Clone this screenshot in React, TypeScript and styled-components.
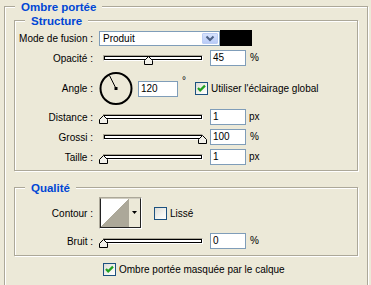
import React from "react";
import styled, { createGlobalStyle } from "styled-components";

const Global = createGlobalStyle`
  html, body { margin: 0; padding: 0; background: #ECE9D8; overflow: hidden; }
  body { font-family: "Liberation Sans", Arial, sans-serif; font-size: 10px; color: #000; }
  * { box-sizing: border-box; }
`;

const Panel = styled.div`
  width: 371px;
  height: 285px;
  overflow: hidden;
  padding: 6px 0 0 4px;
`;

const Group = styled.div<{ $pt: number; $pb: number; $mt?: number; $w?: number }>`
  position: relative;
  width: ${(p) => (p.$w ? `${p.$w}px` : "auto")};
  margin-top: ${(p) => p.$mt ?? 0}px;
  border: 1px solid #aca899;
  box-shadow: inset 1px 1px 0 #fff, 1px 1px 0 #fff;
  padding: ${(p) => p.$pt}px 9px ${(p) => p.$pb}px 0;
`;

const OuterGroup = styled(Group)`
  padding-left: 9px;
`;

const Legend = styled.span`
  position: absolute;
  top: -7px;
  left: 10px;
  padding: 0 6px;
  background: #ece9d8;
  line-height: 14px;
  font-size: 11.5px;
  font-weight: bold;
  color: #0046d5;
  white-space: nowrap;
`;

const Rows = styled.div`
  display: flex;
  flex-direction: column;
  gap: 4px;
`;

const Row = styled.div<{ $h: number; $mt?: number }>`
  display: flex;
  align-items: center;
  height: ${(p) => p.$h}px;
  margin-top: ${(p) => p.$mt ?? 0}px;
`;

const Label = styled.span`
  width: 78px;
  margin-right: 6px;
  text-align: right;
  white-space: nowrap;
  flex-shrink: 0;
`;

const Select = styled.div`
  width: 121px;
  height: 15px;
  border: 1px solid #7f9db9;
  background: #fff;
  display: flex;
  align-items: center;
  padding-left: 3px;
`;

const SelectText = styled.span`
  flex: 1;
`;

const DropButton = styled.div`
  width: 16px;
  height: 11px;
  margin-right: 1px;
  border: 1px solid #bccdf4;
  border-radius: 1px;
  background: linear-gradient(#d6e2fd, #b9cbf7);
  display: flex;
  align-items: center;
  justify-content: center;
`;

const Swatch = styled.div`
  width: 32px;
  height: 16px;
  background: #000;
`;

const SliderBox = styled.div`
  position: relative;
  width: 109px;
  height: 16px;
  flex-shrink: 0;
`;

const Track = styled.div`
  margin: 5px 0 0 4px;
  width: 100px;
  height: 6px;
  border-top: 1px solid #aca899;
  border-left: 1px solid #aca899;
  border-bottom: 1px solid #fff;
  border-right: 1px solid #fff;
`;

const TrackInner = styled.div`
  height: 4px;
  border: 1px solid #000;
  background: #fff;
`;

const Thumb = styled.svg`
  position: absolute;
  top: 6px;
`;

const Field = styled.div<{ $w: number; $ml: number }>`
  width: ${(p) => p.$w}px;
  height: 16px;
  margin-left: ${(p) => p.$ml}px;
  border: 1px solid #7f9db9;
  background: #fff;
  padding-left: 2px;
  line-height: 14px;
  flex-shrink: 0;
`;

const Unit = styled.span<{ $ml: number; $up?: boolean }>`
  margin-left: ${(p) => p.$ml}px;
  align-self: ${(p) => (p.$up ? "flex-start" : "center")};
  margin-top: ${(p) => (p.$up ? 3 : -2)}px;
`;

const CheckLabel = styled.label<{ $ml: number }>`
  display: flex;
  align-items: center;
  gap: 3px;
  margin-left: ${(p) => p.$ml}px;
  white-space: nowrap;
`;

const CheckBox = styled.span`
  width: 13px;
  height: 13px;
  border: 1px solid #1c5180;
  background: linear-gradient(135deg, #dcdcd7 0%, #f4f4f0 60%, #fff 100%);
  display: flex;
  align-items: center;
  justify-content: center;
  flex-shrink: 0;
`;

const Dial = styled.svg`
  flex-shrink: 0;
`;

const ContourBox = styled.div`
  width: 43px;
  height: 32px;
  display: flex;
  border: 1px solid;
  border-color: #aca899 #fff #fff #aca899;
  flex-shrink: 0;
`;

const ContourInner = styled.div`
  flex: 1;
  display: flex;
  border-left: 1px solid #222;
  border-bottom: 1px solid #222;
  border-top: 1px solid #d0cdc0;
  border-right: 1px solid #222;
`;

const Curve = styled.div`
  width: 28px;
  background: linear-gradient(to bottom right, #fff 50%, #aca899 50%);
`;

const CurveArrow = styled.div`
  flex: 1;
  background: #ece9d8;
  display: flex;
  justify-content: center;
  padding-top: 12px;
`;

const Footer = styled.div`
  margin-top: 7px;
  display: flex;
  padding-left: 89px;
  height: 13px;
  align-items: center;
`;

const Check = ({ checked }: { checked: boolean }) => (
  <CheckBox>
    {checked && (
      <svg width="11" height="11" viewBox="0 0 11 11">
        <polyline points="2,5 4.2,7.4 9,2.6" fill="none" stroke="#21a121" strokeWidth="2.2" />
      </svg>
    )}
  </CheckBox>
);

const Slider = ({ value }: { value: number }) => (
  <SliderBox>
    <Track>
      <TrackInner />
    </Track>
    <Thumb width="9" height="9" viewBox="0 0 9 9" style={{ left: Math.round(value * 99) }}>
      <polygon points="4.5,0.5 8.5,4.5 8.5,8.5 0.5,8.5 0.5,4.5" fill="#f2f1ea" stroke="#000" strokeWidth="1" />
    </Thumb>
  </SliderBox>
);

const SliderRow = ({ label, value, text, unit }: { label: string; value: number; text: string; unit: string }) => (
  <Row $h={16}>
    <Label>{label}</Label>
    <Slider value={value} />
    <Field $w={36} $ml={2}>{text}</Field>
    <Unit $ml={unit === "%" ? 4 : 3}>{unit}</Unit>
  </Row>
);

export default function App() {
  return (
    <>
      <Global />
      <Panel>
        <OuterGroup $pt={13} $pb={20} $w={364}>
          <Legend>Ombre portée</Legend>
          <Group $pt={9} $pb={5}>
            <Legend>Structure</Legend>
            <Rows>
              <Row $h={16}>
                <Label>Mode de fusion :</Label>
                <Select>
                  <SelectText>Produit</SelectText>
                  <DropButton>
                    <svg width="10" height="7" viewBox="0 0 10 7">
                      <polyline points="1.5,1.5 5,5 8.5,1.5" fill="none" stroke="#4d6185" strokeWidth="2" />
                    </svg>
                  </DropButton>
                </Select>
                <Swatch />
              </Row>
              <SliderRow label="Opacité :" value={0.45} text="45" unit="%" />
              <Row $h={33} $mt={2}>
                <Label>Angle :</Label>
                <Dial width="34" height="33" viewBox="0 0 34 33">
                  <circle cx="17" cy="16.5" r="15.5" fill="none" stroke="#000" strokeWidth="2" />
                  <line x1="17" y1="16.5" x2="10.5" y2="3.5" stroke="#000" strokeWidth="1" />
                  <rect x="15.5" y="15" width="3" height="3" fill="#000" />
                </Dial>
                <Field $w={40} $ml={5}>120</Field>
                <Unit $ml={4} $up>°</Unit>
                <CheckLabel $ml={9}>
                  <Check checked />
                  Utiliser l'éclairage global
                </CheckLabel>
              </Row>
              <SliderRow label="Distance :" value={0} text="1" unit="px" />
              <SliderRow label="Grossi :" value={1} text="100" unit="%" />
              <SliderRow label="Taille :" value={0} text="1" unit="px" />
            </Rows>
          </Group>
          <Group $pt={9} $pb={6} $mt={16}>
            <Legend>Qualité</Legend>
            <Rows>
              <Row $h={32}>
                <Label>Contour :</Label>
                <ContourBox>
                  <ContourInner>
                    <Curve />
                    <CurveArrow>
                      <svg width="5" height="3" viewBox="0 0 5 3">
                        <polygon points="0,0 5,0 2.5,3" fill="#000" />
                      </svg>
                    </CurveArrow>
                  </ContourInner>
                </ContourBox>
                <CheckLabel $ml={12}>
                  <Check checked={false} />
                  Lissé
                </CheckLabel>
              </Row>
              <SliderRow label="Bruit :" value={0} text="0" unit="%" />
            </Rows>
          </Group>
          <Footer>
            <CheckLabel $ml={0}>
              <Check checked />
              Ombre portée masquée par le calque
            </CheckLabel>
          </Footer>
        </OuterGroup>
      </Panel>
    </>
  );
}
